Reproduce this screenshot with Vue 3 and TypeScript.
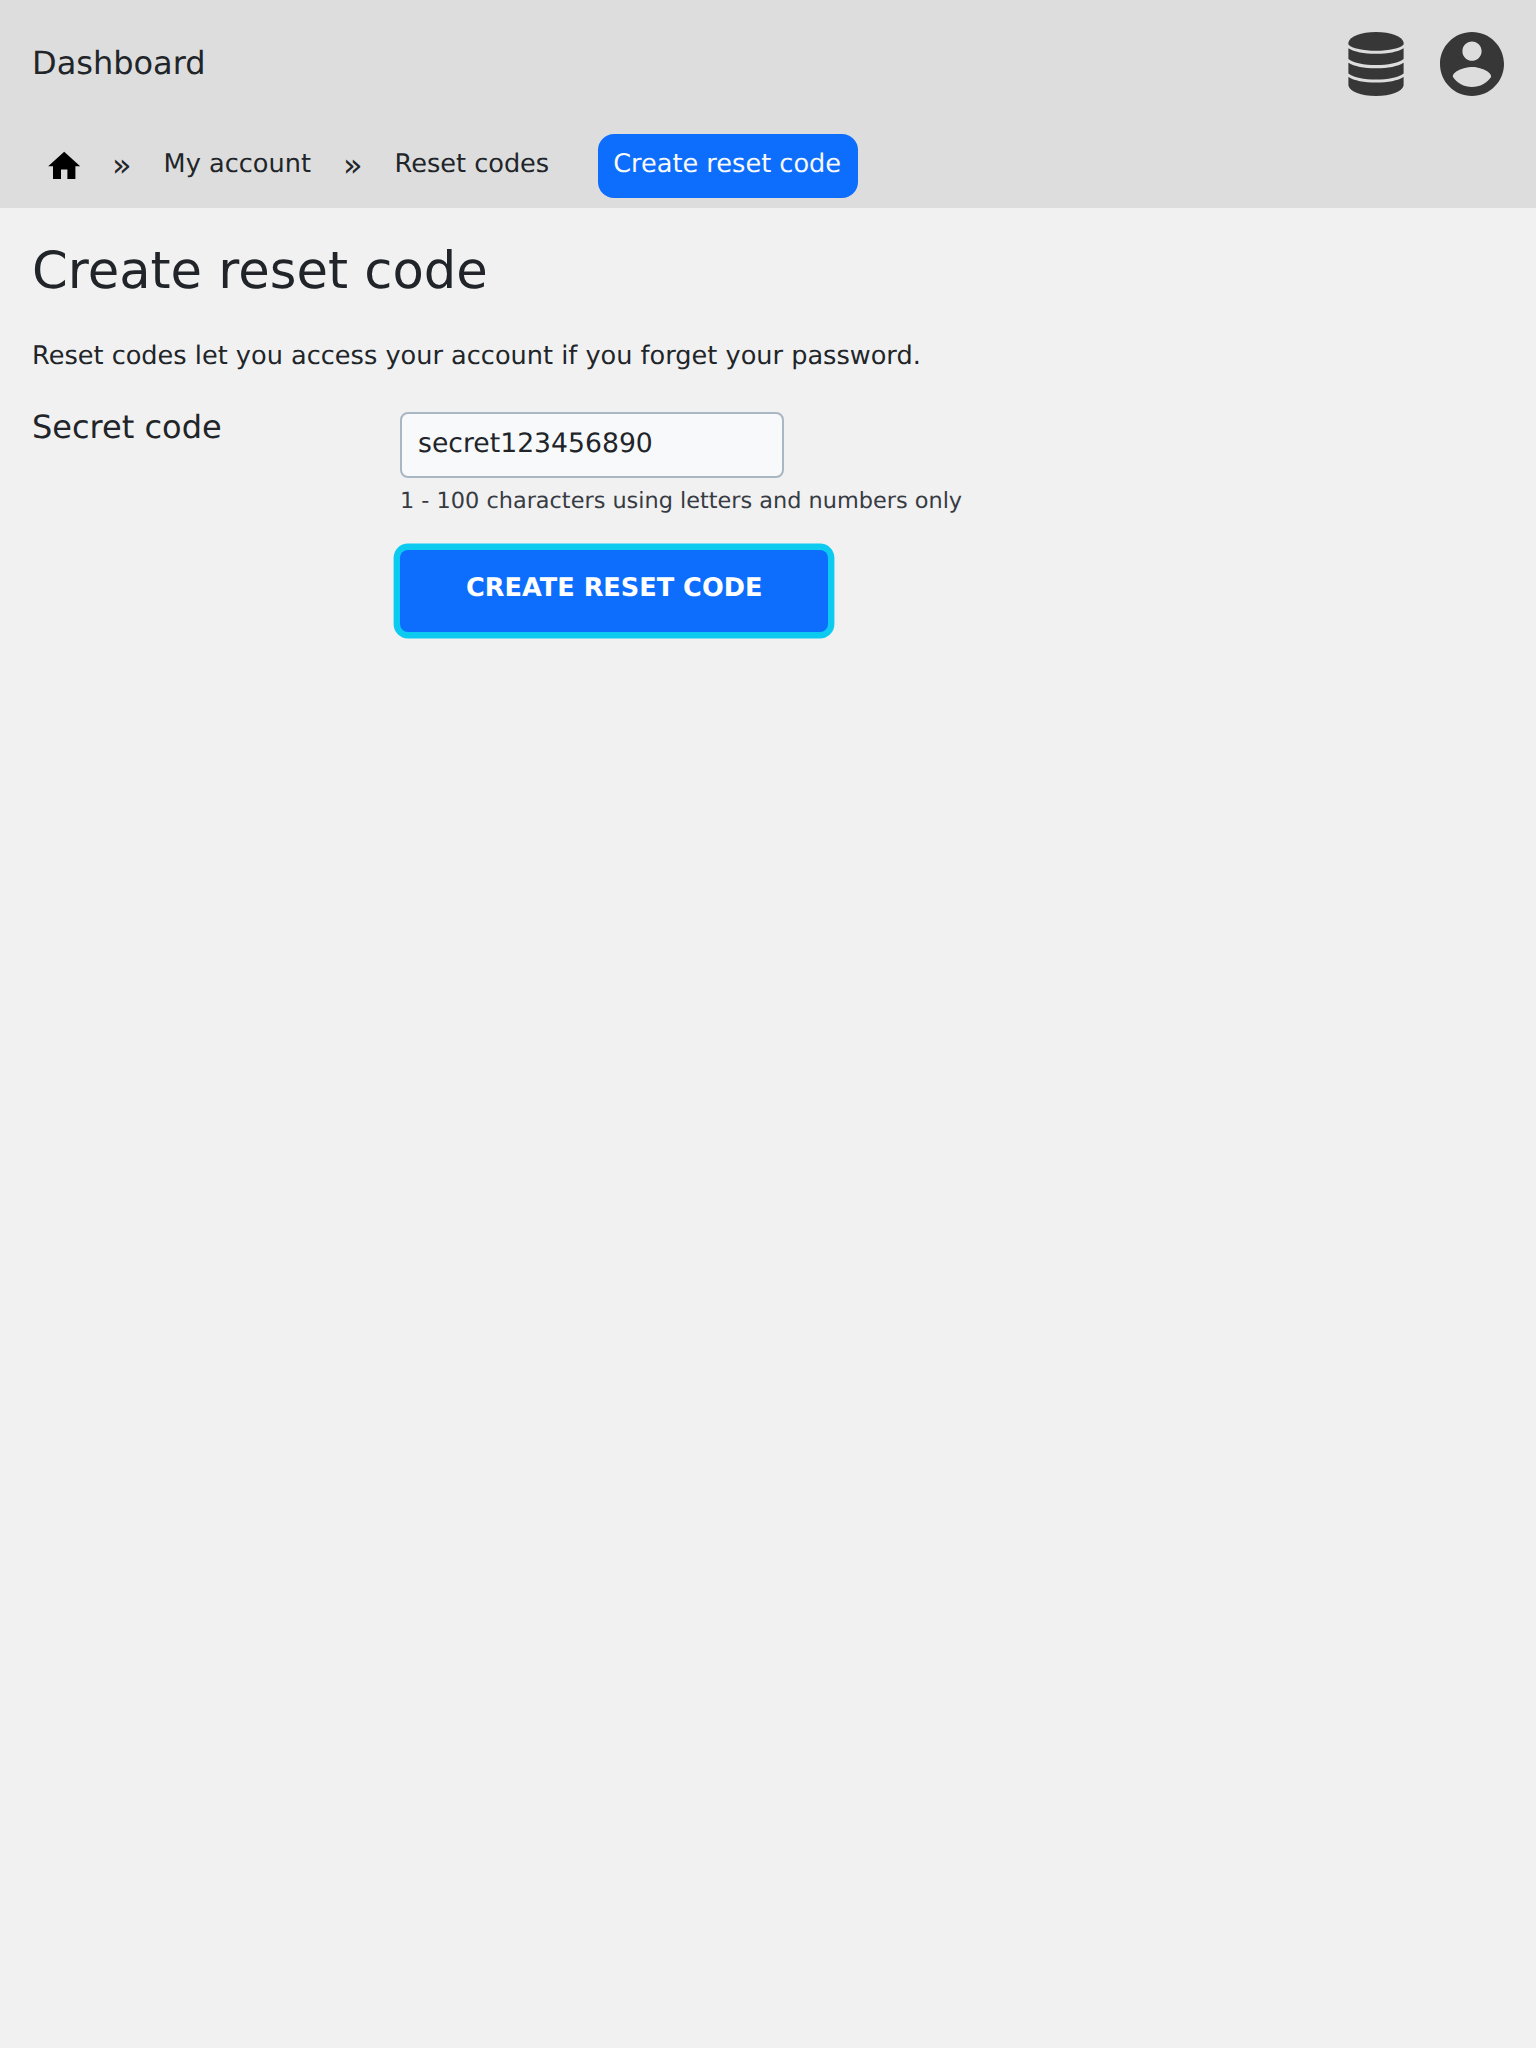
<script setup lang="ts">
import { ref } from 'vue'

interface Crumb {
  label: string
  href: string
}

const crumbs: Crumb[] = [
  { label: 'My account', href: '#account' },
  { label: 'Reset codes', href: '#reset-codes' },
]
const secret = ref<string>('secret123456890')
</script>

<template>
  <div class="page">
    <header class="header">
      <div class="topbar">
        <a class="brand" href="#dashboard">Dashboard</a>
        <nav class="actions">
          <svg class="icon-db" viewBox="0 0 56 64" aria-hidden="true">
            <path d="M.4 10.500C1.800 4.200 13 0 28 0s26.200 4.200 27.600 10.500v2C52 16.400 41 18.800 28 18.800S4 16.400 .4 12.500z" />
            <path d="M.4 16.300C6 20 16 21.800 28 21.800S50 20 55.600 16.300V27C50 31 40 33 28 33S6 31 .4 27z" />
            <path d="M.4 30.700C6 34.400 16 36.200 28 36.200S50 34.400 55.600 30.700V41.400C50 45.400 40 47.400 28 47.400S6 45.400 .4 41.400z" />
            <path d="M.4 45.100C6 48.800 16 50.600 28 50.600S50 48.800 55.600 45.100V53.500C54.200 59.800 43 64 28 64S1.800 59.800 .4 53.500z" />
          </svg>
          <svg class="icon-user" viewBox="2 2 20 20" aria-hidden="true">
            <path d="M12 2C6.480 2 2 6.480 2 12s4.480 10 10 10 10-4.480 10-10S17.520 2 12 2zm0 3c1.660 0 3 1.340 3 3s-1.340 3-3 3-3-1.340-3-3 1.340-3 3-3zm0 14.200c-2.500 0-4.710-1.280-6-3.220.030-1.990 4-3.080 6-3.080 1.990 0 5.970 1.090 6 3.080-1.290 1.940-3.500 3.220-6 3.220z" />
          </svg>
        </nav>
      </div>
      <nav class="crumbs">
        <a class="home" href="#home">
          <svg viewBox="0 0 24 24" aria-hidden="true"><path d="M10 20v-6h4v6h5v-8h3L12 3 2 12h3v8z" /></svg>
        </a>
        <template v-for="crumb in crumbs" :key="crumb.label">
          <span class="sep">»</span>
          <a class="crumb" :href="crumb.href">{{ crumb.label }}</a>
        </template>
        <span class="current">Create reset code</span>
      </nav>
    </header>

    <main class="main">
      <h1>Create reset code</h1>
      <p class="intro">Reset codes let you access your account if you forget your password.</p>
      <form class="form" @submit.prevent>
        <label for="secret">Secret code</label>
        <div class="field">
          <input id="secret" v-model="secret" type="text" />
          <div class="hint">1 - 100 characters using letters and numbers only</div>
          <button type="submit">CREATE RESET CODE</button>
        </div>
      </form>
    </main>
  </div>
</template>

<style>
body {
  margin: 0;
  background: #f1f1f1;
}
</style>

<style scoped>
.page {
  min-height: 2048px;
  background: #f1f1f1;
  color: #212529;
  font-family: "DejaVu Sans", sans-serif;
  font-size: 25.6px;
  text-rendering: geometricPrecision;
}
a {
  color: inherit;
  text-decoration: none;
}
.header {
  height: 208px;
  background: #ddd;
}
.topbar {
  display: flex;
  justify-content: space-between;
  height: 134px;
  padding: 0 32px;
}
.brand {
  padding-top: 39px;
  font-size: 32px;
  line-height: 48px;
}
.actions {
  display: flex;
  gap: 36px;
  padding-top: 32px;
  fill: #373737;
}
.icon-db {
  width: 56px;
  height: 64px;
}
.icon-user {
  width: 64px;
  height: 64px;
}
.crumbs {
  display: flex;
  height: 64px;
  padding-left: 32px;
  line-height: 61px;
}
.home {
  width: 64px;
  height: 64px;
}
.home svg {
  display: block;
  width: 38.4px;
  height: 38.4px;
  margin: 13.4px auto 0;
}
.sep {
  width: 51.6px;
  text-align: center;
  font-size: 32px;
  line-height: 62px;
}
.crumb {
  padding: 0 16px;
}
.current {
  margin-left: 32.8px;
  padding: 0 16.6px 0 15.2px;
  height: 64px;
  border-radius: 16px;
  background: #0d6efd;
  color: #f8f9fa;
}
.main {
  padding: 0 32px;
}
h1 {
  margin: 0;
  padding-top: 33px;
  font-size: 51.2px;
  line-height: 61px;
  font-weight: 400;
}
.intro {
  margin: 34px 0 0;
  line-height: 40px;
}
.form {
  display: flex;
  margin-top: 36px;
}
label {
  width: 368px;
  font-size: 32px;
  line-height: 30px;
}
.field {
  display: flex;
  flex-direction: column;
  align-items: flex-start;
}
input {
  box-sizing: border-box;
  width: 384px;
  height: 66px;
  padding: 0 16px 3px;
  border: 2px solid #a9b6c4;
  border-radius: 8px;
  background: #f8f9fb;
  color: #212529;
  font-family: inherit;
  font-size: 26.667px;
  text-rendering: inherit;
}
.hint {
  margin-top: 5px;
  font-size: 22.4px;
  line-height: 36px;
  color: #373b44;
}
button {
  height: 82px;
  margin-top: 31px;
  padding: 0 66px 6px;
  border: 0;
  border-radius: 8px;
  background: #0d6efd;
  box-shadow: 0 0 0 6.400px #0dcaf0;
  color: #fff;
  font-family: inherit;
  font-size: 25.6px;
  font-weight: 700;
  text-rendering: inherit;
}
</style>
